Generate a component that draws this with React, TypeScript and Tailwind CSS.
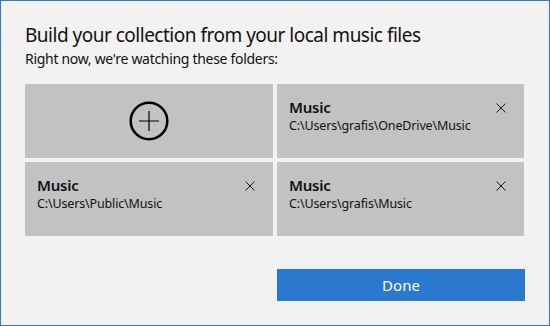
import React from 'react'

const folders = [
  { name: 'Music', path: 'C:\\Users\\grafis\\OneDrive\\Music' },
  { name: 'Music', path: 'C:\\Users\\Public\\Music' },
  { name: 'Music', path: 'C:\\Users\\grafis\\Music' },
]

function CloseIcon() {
  return (
    <svg width="10" height="10" viewBox="0 0 10 10" className="text-[#1a1a1a]">
      <path d="M0.5 0.5 L9.5 9.5 M9.5 0.5 L0.5 9.5" stroke="currentColor" strokeWidth="1" fill="none" />
    </svg>
  )
}

function AddIcon() {
  return (
    <svg width="40" height="40" viewBox="0 0 40 40">
      <circle cx="20" cy="20" r="18.3" stroke="#000" strokeWidth="2.5" fill="none" />
      <path d="M10 20 H30 M20 10 V30" stroke="#000" strokeWidth="1.2" fill="none" />
    </svg>
  )
}

function FolderTile({ name, path }: { name: string; path: string }) {
  return (
    <div className="bg-[#c2c2c2] flex items-start justify-between pl-[12px] pr-[18px] pt-[13px]">
      <div className="flex flex-col">
        <span className="text-[15px] leading-[20px] font-semibold text-[#111] tracking-[-0.2px]">{name}</span>
        <span className="text-[12.5px] leading-[18px] text-[#111] tracking-[-0.15px]">{path}</span>
      </div>
      <div className="pt-[6px]">
        <CloseIcon />
      </div>
    </div>
  )
}

export default function App() {
  return (
    <div
      className="w-[550px] h-[326px] border border-[#2b79d0] bg-[#f2f2f2] px-[24px] pt-[20px] flex flex-col"
      style={{ fontFamily: '"Noto Sans", "Open Sans", sans-serif' }}
    >
      <h1 className="text-[19px] leading-[28px] tracking-[-0.5px] text-[#111]">Build your collection from your local music files</h1>
      <p className="text-[14px] leading-[20px] tracking-[-0.3px] text-[#111]">Right now, we're watching these folders:</p>
      <div className="grid grid-cols-[248px_247px] grid-rows-[74px_74px] gap-[4px] mt-[15px]">
        <button className="bg-[#c2c2c2] flex items-center justify-center">
          <AddIcon />
        </button>
        {folders.map((f, i) => (
          <FolderTile key={i} name={f.name} path={f.path} />
        ))}
      </div>
      <div className="flex justify-end mt-[33px]">
        <button className="w-[248px] h-[32px] bg-[#2b78cf] text-white text-[15px]">Done</button>
      </div>
    </div>
  )
}
